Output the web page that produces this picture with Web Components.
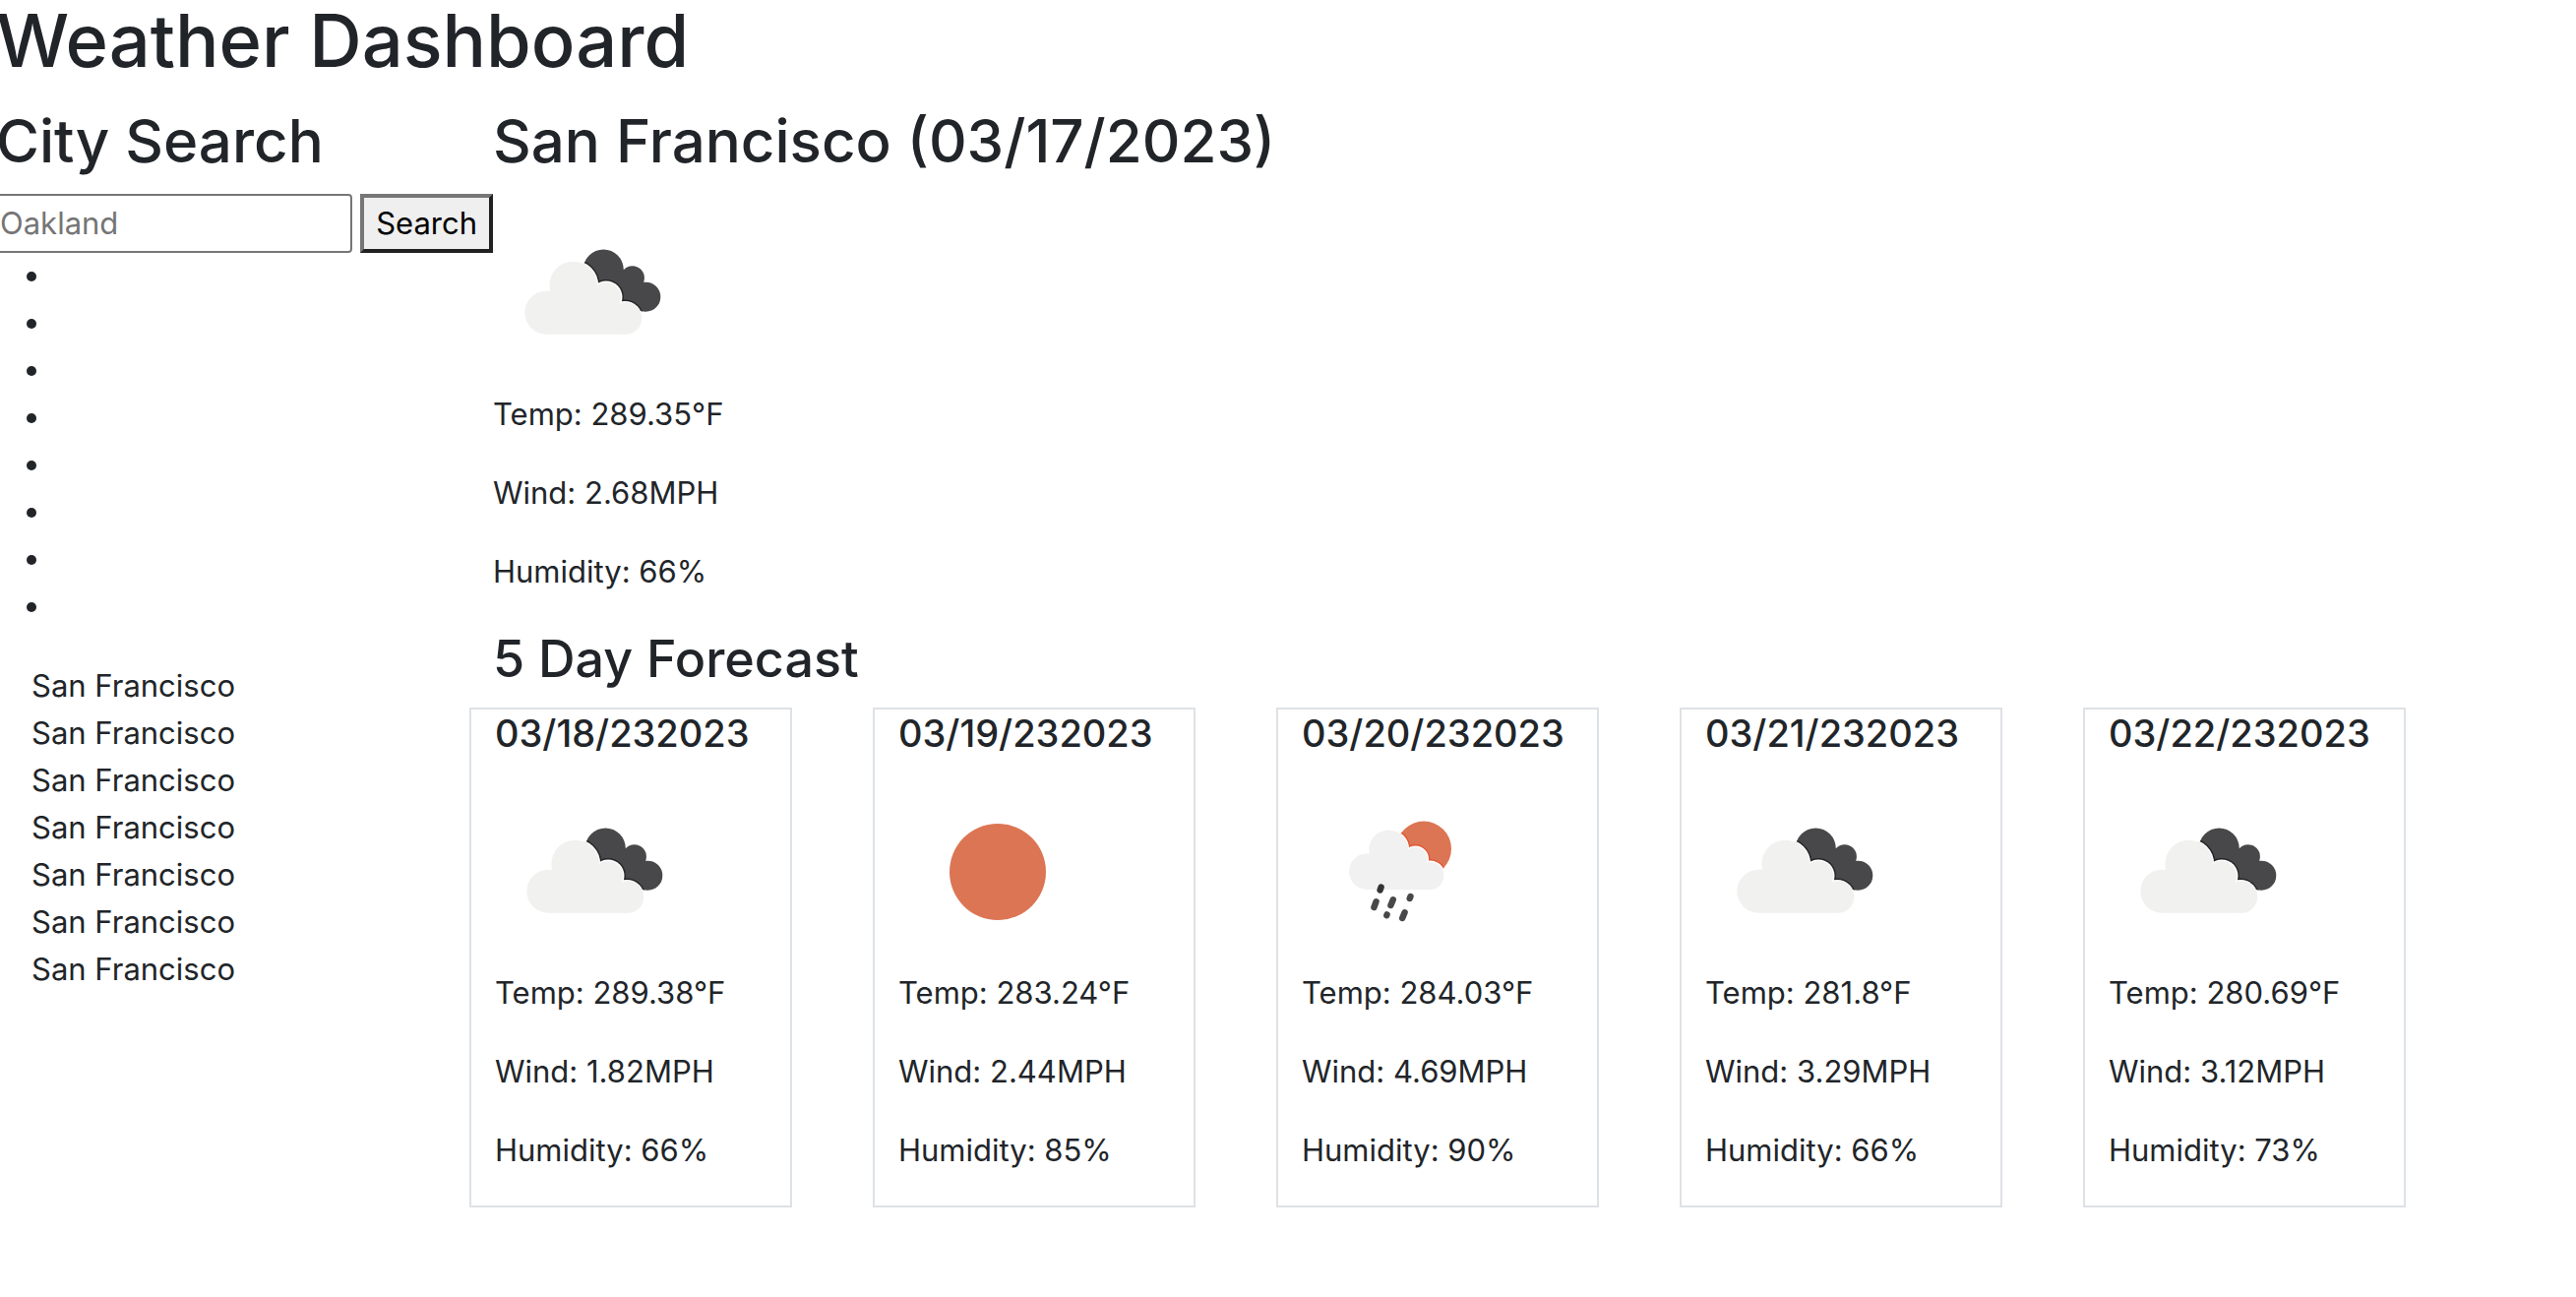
<!DOCTYPE html>
<html lang="en">
<head>
<meta charset="utf-8">
<title>Weather Dashboard</title>
<style>
  body {
    margin: 0;
    background: #fff;
    color: #212529;
    font: 400 31px/48px Inter, "Liberation Sans", sans-serif;
    overflow-x: hidden;
  }
</style>
</head>
<body>
<weather-dashboard></weather-dashboard>
<script>
const cloudy = `
  <clipPath id="back"><circle cx="112.3" cy="77" r="20.5"/><circle cx="141.7" cy="85.5" r="12.2"/><circle cx="155.3" cy="104.7" r="15"/><path d="M104 80L132 78L150 94L152 118L128 114Z"/></clipPath>
  <g clip-path="url(#back)">
    <rect x="80" y="50" width="100" height="80" fill="#48484a"/>
    <g fill="#fff" stroke="#262628" stroke-width="3"><circle cx="81.7" cy="93" r="25.5"/><circle cx="115" cy="105" r="16.5"/><circle cx="134" cy="127" r="18"/></g>
    <g fill="#fff"><circle cx="81.7" cy="93" r="25.5"/><circle cx="115" cy="105" r="16.5"/><circle cx="134" cy="127" r="18"/><rect x="80" y="100" width="45" height="40"/></g>
  </g>
  <g fill="#f1f1f0"><circle cx="81.7" cy="93" r="24.3"/><circle cx="54.3" cy="120.7" r="22"/><circle cx="115" cy="105" r="15"/><circle cx="135" cy="126.5" r="16.3"/><path d="M54 98.7H60L104 94L124 108L135 126V142.7H54Z"/></g>`;

const sun = `<circle cx="101" cy="101" r="49" fill="#dc7553"/>`;

const rain = `
  <clipPath id="disc"><circle cx="124" cy="77.5" r="28"/></clipPath>
  <g clip-path="url(#disc)">
    <rect x="90" y="45" width="70" height="70" fill="#dc7553"/>
    <g fill="#fff" stroke="#e05a38" stroke-width="3"><circle cx="88.3" cy="78.5" r="21"/><circle cx="115.5" cy="88" r="13.5"/><circle cx="130.3" cy="105" r="15.5"/></g>
    <g fill="#fff"><circle cx="88.3" cy="78.5" r="21"/><circle cx="115.5" cy="88" r="13.5"/><circle cx="130.3" cy="105" r="15.5"/></g>
  </g>
  <g fill="#f1f1f1"><circle cx="88.3" cy="78.5" r="20"/><circle cx="66.3" cy="100.7" r="18.3"/><circle cx="115.5" cy="88" r="12.2"/><circle cx="130.3" cy="105" r="14"/><path d="M66 82.5H70L106 80L120 92L130 105V119H66Z"/></g>
  <g stroke="#48484a" stroke-width="6.4" stroke-linecap="round"><path d="M80.6 116.6L79.6 119.4" stroke="#333335"/><path d="M75.6 131.2L73.4 137"/><path d="M92.8 129.2L90.4 135"/><path d="M86.6 144.4L86.3 145.2"/><path d="M110.5 126L109.7 128"/><path d="M104.6 142.2L102.2 148"/></g>`;

const icons = { cloudy, sun, rain };
const labels = { cloudy: "Broken clouds", sun: "Clear sky", rain: "Rain" };

const headings = `
  h1, h2, h3, h4 { margin: 0 0 16px; font-weight: 500; }
  h1 { font-size: 74px; line-height: 96px; }
  h2 { font-size: 60px; line-height: 76px; }
  h3 { font-size: 52px; line-height: 66px; }
  h4 { font-size: 38px; line-height: 48px; }`;

function define(name, render) {
  customElements.define(name, class extends HTMLElement {
    connectedCallback() {
      if (this.shadowRoot) return;
      this.attachShadow({ mode: "open" }).innerHTML = render(this);
    }
  });
}

define("weather-icon", el => {
  const kind = el.getAttribute("kind");
  return `<style>:host { display: block; width: 200px; height: 200px; } svg { display: block; }</style>
  <svg viewBox="0 0 200 200" width="200" height="200" role="img" aria-label="${labels[kind]}">${icons[kind]}</svg>`;
});

define("weather-readings", el => `
  <style>:host { display: block; } p { margin: 0 0 32px; white-space: nowrap; }</style>
  <p>Temp: ${el.getAttribute("temp")}°F</p>
  <p>Wind: ${el.getAttribute("wind")}MPH</p>
  <p>Humidity: ${el.getAttribute("humidity")}%</p>`);

define("forecast-card", el => `
  <style>
    ${headings}
    :host { display: block; box-sizing: border-box; min-width: 0; border: 2px solid #dee2e6; padding: 0 24px; }
    h4 { white-space: nowrap; }
  </style>
  <h4><slot></slot></h4>
  <weather-icon kind="${el.getAttribute("kind")}"></weather-icon>
  <weather-readings temp="${el.getAttribute("temp")}" wind="${el.getAttribute("wind")}" humidity="${el.getAttribute("humidity")}"></weather-readings>`);

define("city-search", () => `
  <style>
    ${headings}
    :host { display: block; }
    form { display: flex; gap: 8px; height: 60px; margin: 0; }
    input, button { font: inherit; box-sizing: border-box; margin: 0; }
    input { flex: 1; min-width: 0; border: 2px solid #767676; border-radius: 4px; padding: 2px; background: #fff; color: #212529; }
    input::placeholder { color: #757575; opacity: 1; }
    button { border: 4px solid; border-color: #767676 #212121 #212121 #767676; border-radius: 0; padding: 0 12px; background: #efefef; color: #000; }
  </style>
  <h2>City Search</h2>
  <form onsubmit="return false">
    <input type="text" placeholder="Oakland" aria-label="City">
    <button type="submit">Search</button>
  </form>`);

define("search-history", () => `
  <style>
    :host { display: block; }
    ul { list-style: none; margin: 0 0 32px; padding: 0 0 0 36px; }
    li { height: 48px; }
    .empty { padding-left: 31px; }
    .empty li { display: flex; align-items: center; }
    .empty li::before { content: ""; width: 10px; height: 10px; border-radius: 50%; background: currentColor; }
  </style>
  <ul class="empty">${"<li></li>".repeat(8)}</ul>
  <ul>${"<li>San Francisco</li>".repeat(7)}</ul>`);

define("current-weather", el => `
  <style>${headings} :host { display: block; }</style>
  <h2><slot></slot></h2>
  <weather-icon kind="cloudy"></weather-icon>
  <weather-readings temp="289.35" wind="2.68" humidity="66"></weather-readings>`);

define("five-day-forecast", () => `
  <style>
    ${headings}
    :host { display: block; }
    .cards { display: grid; grid-template-columns: repeat(5, 1fr); gap: 82px; margin-left: -24px; padding-right: 173px; }
  </style>
  <h3>5 Day Forecast</h3>
  <div class="cards">
    <forecast-card kind="cloudy" temp="289.38" wind="1.82" humidity="66">03/18/232023</forecast-card>
    <forecast-card kind="sun" temp="283.24" wind="2.44" humidity="85">03/19/232023</forecast-card>
    <forecast-card kind="rain" temp="284.03" wind="4.69" humidity="90">03/20/232023</forecast-card>
    <forecast-card kind="cloudy" temp="281.8" wind="3.29" humidity="66">03/21/232023</forecast-card>
    <forecast-card kind="cloudy" temp="280.69" wind="3.12" humidity="73">03/22/232023</forecast-card>
  </div>`);

define("weather-dashboard", () => `
  <style>
    ${headings}
    :host { display: block; margin: -7px 0 0 -4px; }
    .row { display: flex; }
    aside { flex: 0 0 505px; min-width: 0; }
    aside, main { box-sizing: border-box; }
    main { flex: 1; min-width: 0; }
  </style>
  <h1>Weather Dashboard</h1>
  <div class="row">
    <aside><city-search></city-search><search-history></search-history></aside>
    <main><current-weather>San Francisco (03/17/2023)</current-weather><five-day-forecast></five-day-forecast></main>
  </div>`);
</script>
</body>
</html>
